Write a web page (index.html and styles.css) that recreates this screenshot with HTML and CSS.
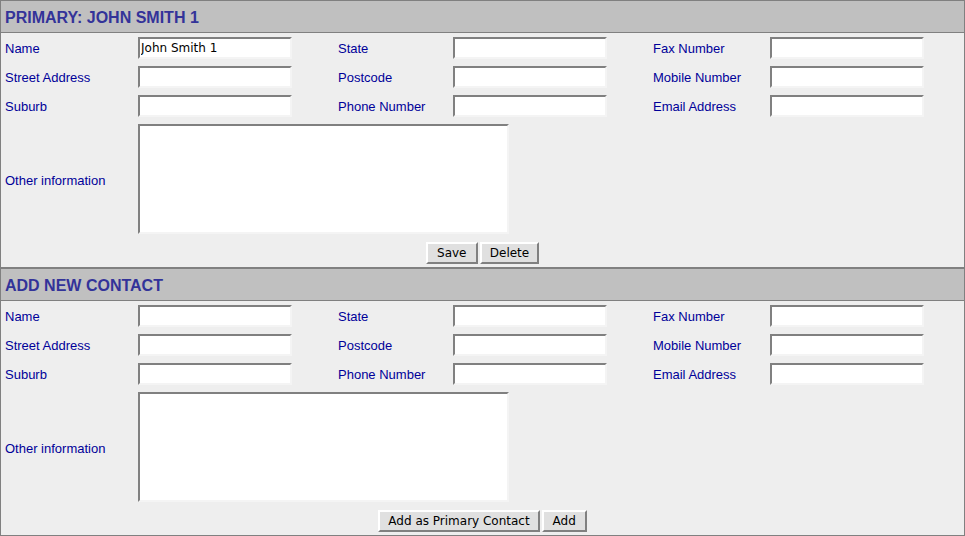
FILE: index.html
```html
<!DOCTYPE html>
<html lang="en">
  <head>
    <meta charset="UTF-8" />
    <title>Contacts</title>
    <link rel="stylesheet" href="styles.css">
  </head>
  <body>
    <form class="contact-box">
      <h2 class="contact-title">PRIMARY: JOHN SMITH 1</h2>
      <div class="contact-grid">
        <label class="lbl">Name</label>
        <input class="field" type="text" value="John Smith 1" />
        <label class="lbl lbl-mid">State</label>
        <input class="field" type="text" />
        <label class="lbl lbl-mid">Fax Number</label>
        <input class="field" type="text" />

        <label class="lbl">Street Address</label>
        <input class="field" type="text" />
        <label class="lbl lbl-mid">Postcode</label>
        <input class="field" type="text" />
        <label class="lbl lbl-mid">Mobile Number</label>
        <input class="field" type="text" />

        <label class="lbl">Suburb</label>
        <input class="field" type="text" />
        <label class="lbl lbl-mid">Phone Number</label>
        <input class="field" type="text" />
        <label class="lbl lbl-mid">Email Address</label>
        <input class="field" type="text" />

        <label class="lbl lbl-notes">Other information</label>
        <textarea class="notes"></textarea>
      </div>
      <div class="actions">
        <button class="btn btn-save" type="button">Save</button>
        <button class="btn" type="button">Delete</button>
      </div>
    </form>

    <form class="contact-box">
      <h2 class="contact-title">ADD NEW CONTACT</h2>
      <div class="contact-grid">
        <label class="lbl">Name</label>
        <input class="field" type="text" />
        <label class="lbl lbl-mid">State</label>
        <input class="field" type="text" />
        <label class="lbl lbl-mid">Fax Number</label>
        <input class="field" type="text" />

        <label class="lbl">Street Address</label>
        <input class="field" type="text" />
        <label class="lbl lbl-mid">Postcode</label>
        <input class="field" type="text" />
        <label class="lbl lbl-mid">Mobile Number</label>
        <input class="field" type="text" />

        <label class="lbl">Suburb</label>
        <input class="field" type="text" />
        <label class="lbl lbl-mid">Phone Number</label>
        <input class="field" type="text" />
        <label class="lbl lbl-mid">Email Address</label>
        <input class="field" type="text" />

        <label class="lbl lbl-notes">Other information</label>
        <textarea class="notes"></textarea>
      </div>
      <div class="actions">
        <button class="btn" type="button">Add as Primary Contact</button>
        <button class="btn btn-add" type="button">Add</button>
      </div>
    </form>
  </body>
</html>
```
FILE: styles.css
```css
* {
  margin: 0;
  padding: 0;
  box-sizing: border-box;
}

body {
  background: #eeeeee;
  font-family: "Liberation Sans", Arial, sans-serif;
  width: 965px;
}

/* One bordered box per contact */
.contact-box {
  height: 268px;
  border: 1px solid #808080;
  background: #eeeeee;
}

.contact-title {
  height: 32px;
  padding: 3px 0 0 4px;
  background: #c0c0c0;
  border-bottom: 1px solid #808080;
  color: #333399;
  font-size: 16px;
  font-weight: bold;
  line-height: 28px;
}

.contact-grid {
  display: grid;
  grid-template-columns: 133px 154px 161px 154px 163px 154px;
  grid-template-rows: 22px 22px 22px 110px;
  row-gap: 7px;
  padding: 4px 0 0 4px;
}

.lbl {
  display: flex;
  align-items: center;
  color: #000099;
  font-size: 13px;
}

.lbl-mid {
  padding-left: 46px;
}

.lbl-notes {
  padding-top: 2px;
}

.field,
.notes {
  width: 154px;
  height: 22px;
  border: 2px solid;
  border-color: #808080 #f4f4f4 #f4f4f4 #808080;
  background: #ffffff;
  font-family: "DejaVu Sans", sans-serif;
  font-size: 12px;
  padding: 0 1px;
  outline: none;
}

.notes {
  grid-column: 2 / span 3;
  width: 371px;
  height: 110px;
  resize: none;
}

.actions {
  display: flex;
  justify-content: center;
  gap: 2px;
  margin-top: 8px;
}

.btn {
  height: 22px;
  padding: 0 8px;
  border: 2px solid;
  border-color: #ffffff #808080 #808080 #ffffff;
  background: #e0e0e0;
  color: #000000;
  font-family: "DejaVu Sans", sans-serif;
  font-size: 12px;
}

.btn-save {
  min-width: 52px;
}

.btn-add {
  min-width: 45px;
}
```
